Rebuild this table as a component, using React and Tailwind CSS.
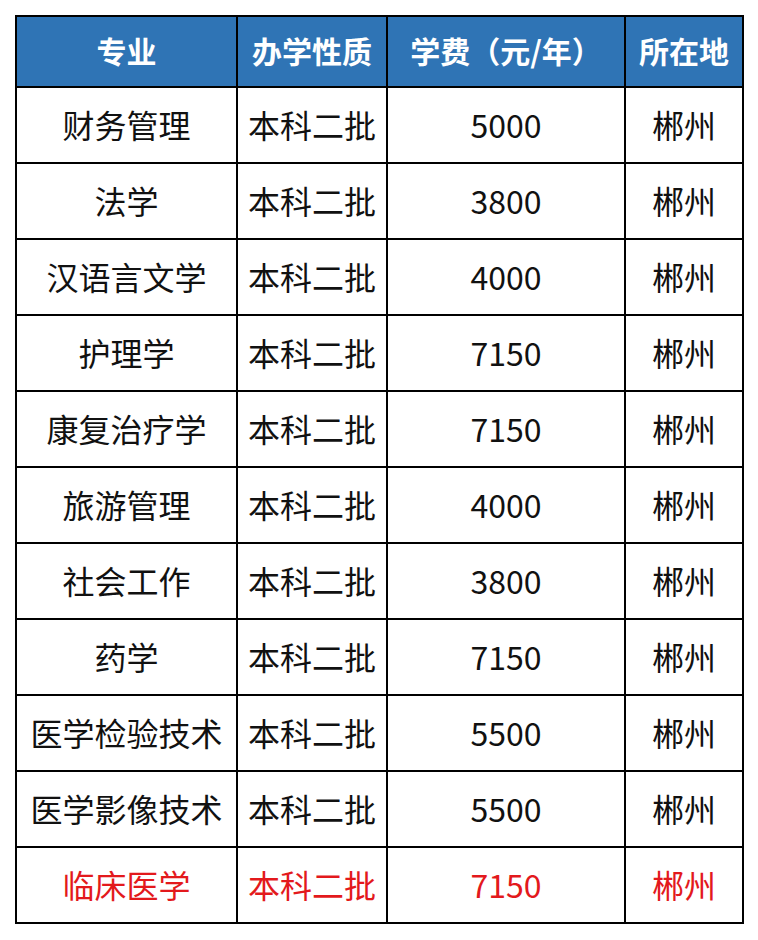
import React from 'react';

const rows = [
  ['财务管理', '本科二批', '5000', '郴州'],
  ['法学', '本科二批', '3800', '郴州'],
  ['汉语言文学', '本科二批', '4000', '郴州'],
  ['护理学', '本科二批', '7150', '郴州'],
  ['康复治疗学', '本科二批', '7150', '郴州'],
  ['旅游管理', '本科二批', '4000', '郴州'],
  ['社会工作', '本科二批', '3800', '郴州'],
  ['药学', '本科二批', '7150', '郴州'],
  ['医学检验技术', '本科二批', '5500', '郴州'],
  ['医学影像技术', '本科二批', '5500', '郴州'],
];

const headers = ['专业', '办学性质', '学费（元/年）', '所在地'];
const widths = ['w-[221px]', 'w-[150px]', 'w-[238px]', 'w-[118px]'];

const App = () => {
  return (
    <div
      className="w-[758px] h-[940px] bg-white pt-[15px] pl-[15px]"
      style={{ fontFamily: '"Noto Sans CJK SC", "Noto Sans", sans-serif' }}
    >
      <table className="border-collapse border-2 border-black table-fixed">
        <thead>
          <tr className="h-[71px] bg-[#2f74b5]">
            {headers.map((h, i) => (
              <th
                key={h}
                className={`${widths[i]} border-2 border-black text-white text-[30px] font-bold text-center p-0 pb-[3px] leading-none`}
              >
                {h}
              </th>
            ))}
          </tr>
        </thead>
        <tbody>
          {rows.map((r, idx) => (
            <tr key={idx} className="h-[76px]">
              {r.map((c, i) => (
                <td
                  key={i}
                  className="border-2 border-black text-center text-[32px] text-[#111] p-0 pb-[3px] leading-none"
                >
                  {c}
                </td>
              ))}
            </tr>
          ))}
          <tr className="h-[76px]">
            {['临床医学', '本科二批', '7150', '郴州'].map((c, i) => (
              <td
                key={i}
                className="border-2 border-black text-center text-[32px] text-[#e3191c] p-0 pb-[3px] leading-none"
              >
                {c}
              </td>
            ))}
          </tr>
        </tbody>
      </table>
    </div>
  );
};

export default App;
